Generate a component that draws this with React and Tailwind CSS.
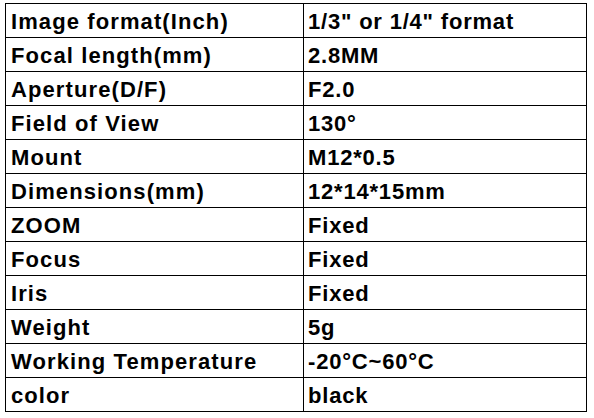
import React from 'react';

const specs = [
  ['Image format(Inch)', '1/3" or 1/4" format'],
  ['Focal length(mm)', '2.8MM'],
  ['Aperture(D/F)', 'F2.0'],
  ['Field of View', '130°'],
  ['Mount', 'M12*0.5'],
  ['Dimensions(mm)', '12*14*15mm'],
  ['ZOOM', 'Fixed'],
  ['Focus', 'Fixed'],
  ['Iris', 'Fixed'],
  ['Weight', '5g'],
  ['Working Temperature', '-20°C~60°C'],
  ['color', 'black'],
];

const App = () => {
  return (
    <div className="w-[594px] h-[418px] bg-white overflow-hidden pt-[3px] pl-[5px]" style={{ fontFamily: '"Liberation Sans", Arial, sans-serif' }}>
      <table className="border-collapse border-[1.5px] border-black table-fixed w-[581px]">
        <colgroup>
          <col className="w-[298px]" />
          <col className="w-[283px]" />
        </colgroup>
        <tbody>
          {specs.map(([label, value]) => (
            <tr key={label} className="h-[34px]">
              <td className="border-[1.5px] border-black pl-[5px] pt-[2px] text-[22px] tracking-[1.1px] font-bold text-black leading-none whitespace-nowrap">
                {label}
              </td>
              <td className="border-[1.5px] border-black pl-[4px] pt-[2px] text-[22px] tracking-[0.8px] font-bold text-black leading-none whitespace-nowrap">
                {value}
              </td>
            </tr>
          ))}
        </tbody>
      </table>
    </div>
  );
};

export default App;
